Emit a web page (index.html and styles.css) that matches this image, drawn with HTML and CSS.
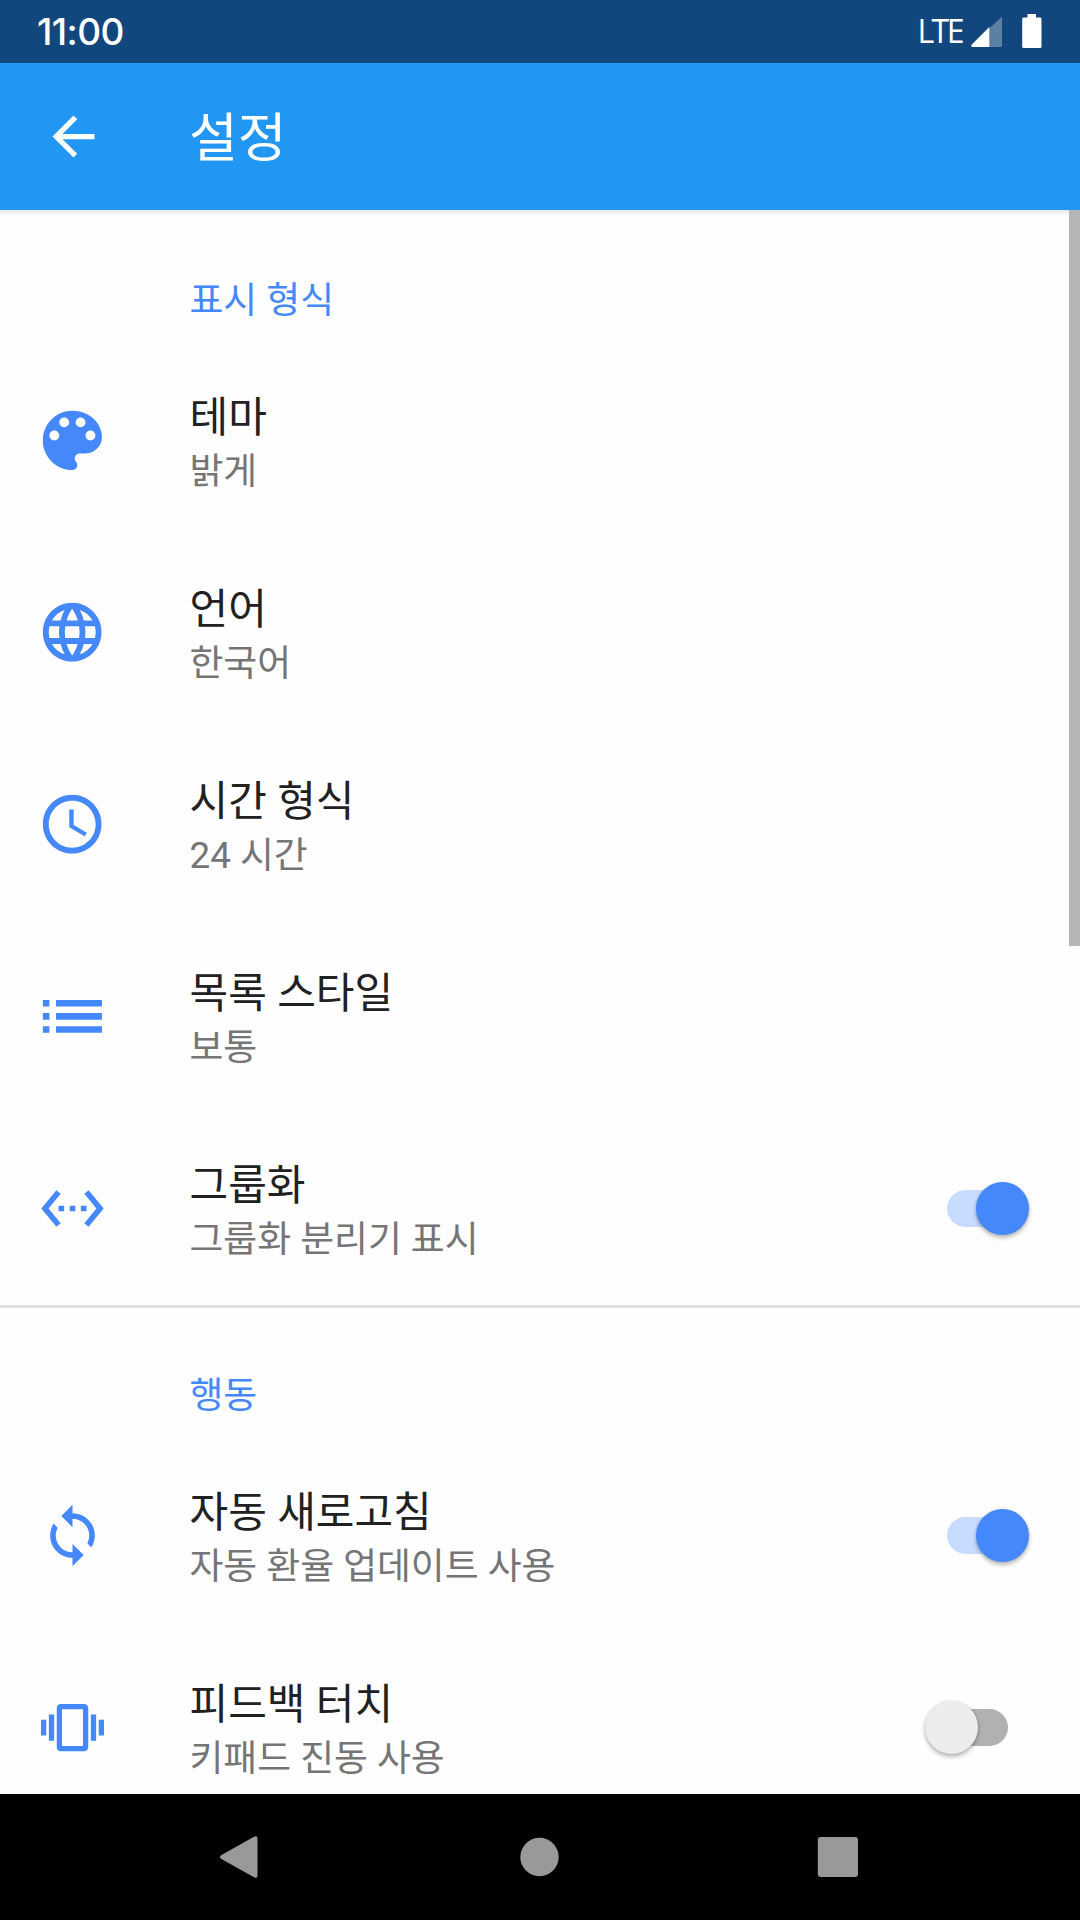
FILE: index.html
```html
<!DOCTYPE html>
<html lang="ko">
<head>
<meta charset="utf-8">
<title>설정</title>
<link rel="stylesheet" href="styles.css">
</head>
<body>
<div class="screen">
  <header class="status-bar">
    <span class="clock">11:00</span>
    <div class="status-icons">
      <span class="network">LTE</span>
      <svg class="signal" viewBox="0 0 32 32"><path class="signal-empty" d="M31 .5V29.500Q31 31 29.500 31H1L0 29.500Z"/><path d="M18.300 11V31H1.500Q-.3 30.500.6 28.800Z"/></svg>
      <svg class="battery" viewBox="0 0 20 34"><path d="M5.500 0H14V3.500H18.200Q19.500 3.500 19.500 5V32.500Q19.500 34 18.200 34H1.500Q.2 34 .2 32.500V5Q.2 3.500 1.500 3.500H5.500Z"/></svg>
    </div>
  </header>

  <nav class="app-bar">
    <svg class="back" viewBox="0 0 24 24"><path d="M20 11H7.830l5.590-5.590L12 4l-8 8 8 8 1.410-1.410L7.830 13H20v-2z"/></svg>
    <h1 class="app-title">설정</h1>
  </nav>

  <main class="content">
    <section class="group">
      <h2 class="group-title">표시 형식</h2>
      <div class="row">
        <div class="lead"><svg class="icon icon-xl" viewBox="0 0 24 24"><path d="M12 3c-4.970 0-9 4.030-9 9s4.030 9 9 9c.83 0 1.500-.67 1.500-1.500 0-.39-.15-.74-.39-1.010-.23-.26-.38-.61-.38-.99 0-.83.67-1.500 1.500-1.500H16c2.760 0 5-2.240 5-5 0-4.420-4.030-8-9-8zm-5.500 9c-.83 0-1.500-.67-1.500-1.500S5.670 9 6.500 9 8 9.670 8 10.500 7.330 12 6.500 12zm3-4C8.670 8 8 7.330 8 6.500S8.670 5 9.500 5s1.500.67 1.500 1.500S10.330 8 9.500 8zm5 0c-.83 0-1.500-.67-1.500-1.500S13.670 5 14.500 5s1.500.67 1.500 1.500S15.330 8 14.500 8zm3 4c-.83 0-1.500-.67-1.500-1.500S16.670 9 17.500 9s1.500.67 1.500 1.500-.67 1.500-1.500 1.500z"/></svg></div>
        <div class="labels"><div class="title">테마</div><div class="summary">밝게</div></div>
      </div>
      <div class="row">
        <div class="lead"><svg class="icon icon-lg" viewBox="0 0 24 24"><path d="M11.990 2C6.470 2 2 6.480 2 12s4.470 10 9.990 10C17.520 22 22 17.520 22 12S17.520 2 11.990 2zm6.930 6h-2.950c-.32-1.250-.78-2.450-1.380-3.560 1.840.63 3.370 1.910 4.330 3.560zM12 4.040c.83 1.200 1.480 2.530 1.910 3.960h-3.820c.43-1.430 1.080-2.760 1.910-3.960zM4.260 14C4.100 13.360 4 12.690 4 12s.1-1.360.26-2h3.380c-.08.66-.14 1.320-.14 2 0 .68.06 1.340.14 2H4.260zm.82 2h2.950c.32 1.250.78 2.450 1.380 3.560-1.840-.63-3.370-1.900-4.330-3.560zm2.950-8H5.080c.96-1.660 2.490-2.930 4.330-3.560C8.810 5.550 8.350 6.750 8.030 8zM12 19.960c-.83-1.200-1.480-2.530-1.910-3.960h3.820c-.43 1.430-1.080 2.760-1.910 3.960zM14.340 14H9.660c-.09-.66-.16-1.320-.16-2 0-.68.07-1.350.16-2h4.680c.09.65.16 1.320.16 2 0 .68-.07 1.340-.16 2zm.25 5.560c.6-1.110 1.060-2.310 1.380-3.560h2.950c-.96 1.650-2.490 2.930-4.330 3.560zM16.360 14c.08-.66.14-1.320.14-2 0-.68-.06-1.340-.14-2h3.380c.16.64.26 1.310.26 2s-.1 1.360-.26 2h-3.380z"/></svg></div>
        <div class="labels"><div class="title">언어</div><div class="summary">한국어</div></div>
      </div>
      <div class="row">
        <div class="lead"><svg class="icon icon-lg" viewBox="0 0 24 24"><path d="M11.990 2C6.470 2 2 6.480 2 12s4.470 10 9.990 10C17.520 22 22 17.520 22 12S17.520 2 11.990 2zM12 20c-4.420 0-8-3.580-8-8s3.580-8 8-8 8 3.580 8 8-3.580 8-8 8zM12.500 7H11v6l5.250 3.150.75-1.230-4.500-2.670z"/></svg></div>
        <div class="labels"><div class="title">시간 형식</div><div class="summary">24 시간</div></div>
      </div>
      <div class="row">
        <div class="lead"><svg class="icon icon-xl" viewBox="0 0 24 24"><path d="M3 13h2v-2H3v2zm0 4h2v-2H3v2zm0-8h2V7H3v2zm4 4h14v-2H7v2zm0 4h14v-2H7v2zM7 7v2h14V7H7z"/></svg></div>
        <div class="labels"><div class="title">목록 스타일</div><div class="summary">보통</div></div>
      </div>
      <div class="row">
        <div class="lead"><svg class="icon icon-md" viewBox="0 0 24 24"><path d="M7.770 6.760L6.230 5.480.82 12l5.410 6.520 1.540-1.280L3.420 12l4.350-5.240zM7 13h2v-2H7v2zm10-2h-2v2h2v-2zm-6 2h2v-2h-2v2zm6.770-7.520l-1.540 1.280L20.580 12l-4.350 5.240 1.540 1.280L23.180 12l-5.410-6.520z"/></svg></div>
        <div class="labels"><div class="title">그룹화</div><div class="summary">그룹화 분리기 표시</div></div>
        <div class="switch on"><span class="thumb"></span></div>
      </div>
    </section>
    <section class="group divided">
      <h2 class="group-title">행동</h2>
      <div class="row">
        <div class="lead"><svg class="icon icon-md" viewBox="0 0 24 24"><path d="M12 4V1L8 5l4 4V6c3.310 0 6 2.690 6 6 0 1.010-.25 1.970-.7 2.800l1.460 1.460C19.540 15.030 20 13.570 20 12c0-4.420-3.580-8-8-8zm0 14c-3.310 0-6-2.690-6-6 0-1.010.25-1.970.7-2.800L5.240 7.740C4.460 8.970 4 10.430 4 12c0 4.420 3.580 8 8 8v3l4-4-4-4v3z"/></svg></div>
        <div class="labels"><div class="title">자동 새로고침</div><div class="summary">자동 환율 업데이트 사용</div></div>
        <div class="switch on"><span class="thumb"></span></div>
      </div>
      <div class="row">
        <div class="lead"><svg class="icon icon-sm" viewBox="0 0 24 24"><path d="M0 15h2V9H0v6zm3 2h2V7H3v10zm19-8v6h2V9h-2zm-3 8h2V7h-2v10zM16.500 3h-9C6.670 3 6 3.670 6 4.500v15c0 .83.67 1.500 1.500 1.500h9c.83 0 1.500-.67 1.500-1.500v-15c0-.83-.67-1.500-1.500-1.500zM16 19H8V5h8v14z"/></svg></div>
        <div class="labels"><div class="title">피드백 터치</div><div class="summary">키패드 진동 사용</div></div>
        <div class="switch"><span class="thumb"></span></div>
      </div>
    </section>
    <div class="scrollbar"></div>
  </main>

  <footer class="nav-bar">
    <svg class="nav-icon" viewBox="0 0 42 42"><path d="M3 19.200Q1 21 3 22.800L36 41.200Q39.500 43 39.500 39.500V2.500Q39.500-1 36 .8Z"/></svg>
    <svg class="nav-icon" viewBox="0 0 42 42"><circle cx="21.500" cy="21" r="19.200"/></svg>
    <svg class="nav-icon" viewBox="0 0 42 42"><rect x=".8" y="1" width="40.200" height="40" rx="3"/></svg>
  </footer>
</div>
</body>
</html>
```
FILE: styles.css
```css
* { box-sizing: border-box; }

body {
  margin: 0;
  font-family: Roboto, "Noto Sans CJK KR", sans-serif;
}

svg { display: block; flex: none; }

.screen {
  width: 1080px;
  height: 1920px;
  display: flex;
  flex-direction: column;
  overflow: hidden;
  background: #fefefe;
}

.status-bar {
  flex: none;
  height: 63px;
  padding: 0 38px 0 37px;
  display: flex;
  justify-content: space-between;
  align-items: center;
  background: #12477e;
  color: #fff;
}

.clock {
  font: 500 37px/62px Inter, sans-serif;
  letter-spacing: -0.6px;
}

.status-icons {
  display: flex;
  align-items: center;
  fill: #fff;
}

.network {
  font: 400 32px/60px "Open Sans", sans-serif;
  letter-spacing: -2.5px;
  margin: 0 9px 2px 0;
}

.signal { width: 32px; height: 32px; margin-right: 19px; }
.signal-empty { fill: #5b80a6; }
.battery { width: 20px; height: 34px; margin-bottom: 1px; }

.app-bar {
  flex: none;
  height: 147px;
  padding-left: 42px;
  display: flex;
  align-items: center;
  background: #2196f3;
  color: #fff;
}

.back { width: 63px; height: 63px; fill: #fff; }

.app-title {
  margin: 5px 0 0 84px;
  font-size: 53px;
  font-weight: 400;
  line-height: 76px;
}

.content {
  position: relative;
  flex: 1;
  min-height: 0;
  overflow: hidden;
  background: linear-gradient(#e6e8ea, #fefefe) top / 100% 6px no-repeat;
}

.group-title {
  height: 134px;
  margin: 0;
  padding: 64.500px 0 0 189.500px;
  color: #4488fb;
  font-size: 36.8px;
  font-weight: 400;
  line-height: 52px;
}

.divided { box-shadow: inset 0 3px #e0e0e0; margin-top: 1px; }

.row {
  height: 192px;
  padding-right: 51.500px;
  display: flex;
  align-items: center;
}

.lead {
  flex: none;
  width: 145px;
  display: flex;
  justify-content: center;
}

.icon { fill: #4488fb; }
.icon-sm { width: 63px; height: 63px; }
.icon-md { width: 67px; height: 67px; }
.icon-lg { width: 70.400px; height: 70.400px; }
.icon-xl { width: 78.800px; height: 78.800px; }

.labels { flex: 1; padding: 8px 0 0 44.500px; }

.title {
  color: #212121;
  font-size: 42px;
  line-height: 56px;
}

.summary {
  color: #757575;
  font-size: 36.8px;
  line-height: 52px;
}

.switch {
  position: relative;
  width: 104px;
  height: 53px;
  display: flex;
  isolation: isolate;
}

.switch::before {
  content: "";
  position: absolute;
  left: 22px;
  top: 8px;
  width: 61px;
  height: 37px;
  border-radius: 19px;
  background: #b1b1b1;
  z-index: -1;
}

.thumb {
  width: 53px;
  height: 53px;
  border-radius: 50%;
  background: #ececec;
  box-shadow: 0 3px 4px rgba(0, 0, 0, .26), 0 0 3px rgba(0, 0, 0, .12);
}

.switch.on { justify-content: flex-end; }
.switch.on::before { background: #c7dcff; }
.switch.on .thumb { background: #4488fb; }

.scrollbar {
  position: absolute;
  top: 0;
  right: 0;
  width: 11px;
  height: 736px;
  background: #b6b6b6;
}

.nav-bar {
  flex: none;
  height: 126px;
  padding: 0 221px 0 218px;
  display: flex;
  align-items: center;
  justify-content: space-between;
  background: #000;
}

.nav-icon { width: 42px; height: 42px; fill: #999; }
```
